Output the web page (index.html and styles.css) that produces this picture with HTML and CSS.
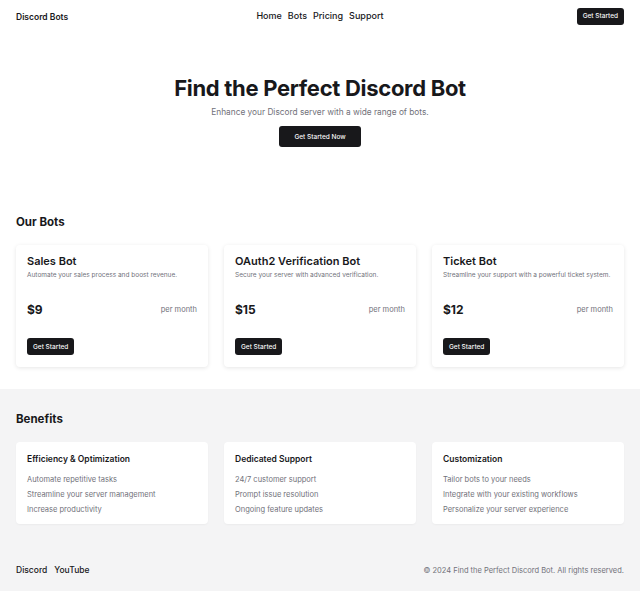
FILE: index.html
```html
<!DOCTYPE html>
<html lang="en">
<head>
  <meta charset="UTF-8">
  <meta name="viewport" content="width=device-width, initial-scale=1.0">
  <title>Discord Bots</title>
  <link rel="stylesheet" href="styles.css">
</head>
<body>
  <header class="site-header">
    <a class="logo" href="#">Discord Bots</a>
    <nav class="main-nav">
      <a href="#">Home</a>
      <a href="#">Bots</a>
      <a href="#">Pricing</a>
      <a href="#">Support</a>
    </nav>
    <div class="header-action">
      <button class="btn btn-sm">Get Started</button>
    </div>
  </header>

  <section class="hero">
    <h1>Find the Perfect Discord Bot</h1>
    <p>Enhance your Discord server with a wide range of bots.</p>
    <button class="btn btn-hero">Get Started Now</button>
  </section>

  <section class="bots">
    <h2>Our Bots</h2>
    <div class="card-grid">
      <div class="bot-card">
        <h3>Sales Bot</h3>
        <p class="bot-desc">Automate your sales process and boost revenue.</p>
        <div class="price-row">
          <span class="price">$9</span>
          <span class="period">per month</span>
        </div>
        <button class="btn btn-card">Get Started</button>
      </div>
      <div class="bot-card">
        <h3>OAuth2 Verification Bot</h3>
        <p class="bot-desc">Secure your server with advanced verification.</p>
        <div class="price-row">
          <span class="price">$15</span>
          <span class="period">per month</span>
        </div>
        <button class="btn btn-card">Get Started</button>
      </div>
      <div class="bot-card">
        <h3>Ticket Bot</h3>
        <p class="bot-desc">Streamline your support with a powerful ticket system.</p>
        <div class="price-row">
          <span class="price">$12</span>
          <span class="period">per month</span>
        </div>
        <button class="btn btn-card">Get Started</button>
      </div>
    </div>
  </section>

  <div class="gray-area">
    <section class="benefits">
      <h2>Benefits</h2>
      <div class="card-grid">
        <div class="benefit-card">
          <h4>Efficiency &amp; Optimization</h4>
          <ul>
            <li>Automate repetitive tasks</li>
            <li>Streamline your server management</li>
            <li>Increase productivity</li>
          </ul>
        </div>
        <div class="benefit-card">
          <h4>Dedicated Support</h4>
          <ul>
            <li>24/7 customer support</li>
            <li>Prompt issue resolution</li>
            <li>Ongoing feature updates</li>
          </ul>
        </div>
        <div class="benefit-card">
          <h4>Customization</h4>
          <ul>
            <li>Tailor bots to your needs</li>
            <li>Integrate with your existing workflows</li>
            <li>Personalize your server experience</li>
          </ul>
        </div>
      </div>
    </section>

    <footer class="site-footer">
      <div class="footer-links">
        <a href="#">Discord</a>
        <a href="#">YouTube</a>
      </div>
      <p class="copyright">&copy; 2024 Find the Perfect Discord Bot. All rights reserved.</p>
    </footer>
  </div>
</body>
</html>
```

FILE: styles.css
```css
body {
  font-family: Inter, 'Noto Sans', sans-serif;
  background-color: #ffffff;
  margin: 0;
  padding: 0;
  color: #18181b;
}

a {
  color: inherit;
  text-decoration: none;
}

h1, h2, h3, h4, p, ul {
  margin: 0;
}

.btn {
  background-color: #18181b;
  color: #fafafa;
  border: none;
  border-radius: 3px;
  font-family: inherit;
  font-weight: 500;
  cursor: pointer;
}

.site-header {
  display: grid;
  grid-template-columns: 1fr auto 1fr;
  align-items: center;
  height: 32px;
  padding: 0 16px;
}

.logo {
  font-size: 8.5px;
  font-weight: 600;
  line-height: 12px;
  padding-top: 1px;
}

.main-nav {
  display: flex;
  gap: 6px;
  font-size: 9px;
  font-weight: 500;
  line-height: 12px;
}

.header-action {
  display: flex;
  justify-content: flex-end;
}

.btn-sm {
  font-size: 6.5px;
  height: 17px;
  padding: 0 6px;
}

.hero {
  text-align: center;
  padding: 43px 16px 0;
  height: 150px;
  box-sizing: border-box;
}

.hero h1 {
  font-size: 22px;
  font-weight: 700;
  line-height: 1.2;
  letter-spacing: -0.3px;
}

.hero p {
  font-size: 8.3px;
  color: #71717a;
  margin-top: 6px;
}

.btn-hero {
  font-size: 6.5px;
  height: 21px;
  padding: 0 15px;
  margin-top: 9px;
}

.bots, .benefits {
  padding: 0 16px;
}

.bots {
  padding-top: 32px;
  padding-bottom: 22px;
}

.bots h2, .benefits h2 {
  font-size: 11.5px;
  font-weight: 700;
  line-height: 16px;
  margin-bottom: 15px;
}

.card-grid {
  display: grid;
  grid-template-columns: repeat(3, 1fr);
  gap: 16px;
}

.bot-card, .benefit-card {
  background-color: #ffffff;
  border-radius: 4px;
  box-shadow: 0 1px 4px rgba(0, 0, 0, 0.1);
  padding: 11px;
}

.bot-card {
  height: 122px;
  box-sizing: border-box;
  display: flex;
  flex-direction: column;
  align-items: flex-start;
  padding-top: 8px;
}

.bot-card h3 {
  font-size: 11px;
  font-weight: 600;
  line-height: 16px;
}

.bot-desc {
  font-size: 6.5px;
  color: #71717a;
  margin-top: 2px;
}

.price-row {
  display: flex;
  justify-content: space-between;
  align-items: center;
  width: 100%;
  margin-top: 23px;
}

.price {
  font-size: 12px;
  font-weight: 700;
}

.period {
  font-size: 7.5px;
  color: #71717a;
}

.btn-card {
  font-size: 6.5px;
  height: 17px;
  padding: 0 6px;
  margin-top: 21px;
}

.gray-area {
  background-color: #f4f4f5;
}

.benefits {
  padding-top: 22px;
}

.benefit-card {
  height: 82px;
  box-sizing: border-box;
  box-shadow: 0 1px 2px rgba(0, 0, 0, 0.04);
}

.benefit-card h4 {
  font-size: 8.5px;
  font-weight: 600;
  line-height: 12px;
}

.benefit-card ul {
  list-style: none;
  padding: 0;
  margin-top: 7px;
}

.benefit-card li {
  font-size: 7.5px;
  color: #71717a;
  line-height: 15px;
}

.site-footer {
  display: flex;
  justify-content: space-between;
  align-items: center;
  padding: 0 16px;
  height: 92px;
}

.footer-links {
  display: flex;
  gap: 7px;
  font-size: 8.5px;
  font-weight: 500;
}

.copyright {
  font-size: 7.5px;
  color: #71717a;
}
```
